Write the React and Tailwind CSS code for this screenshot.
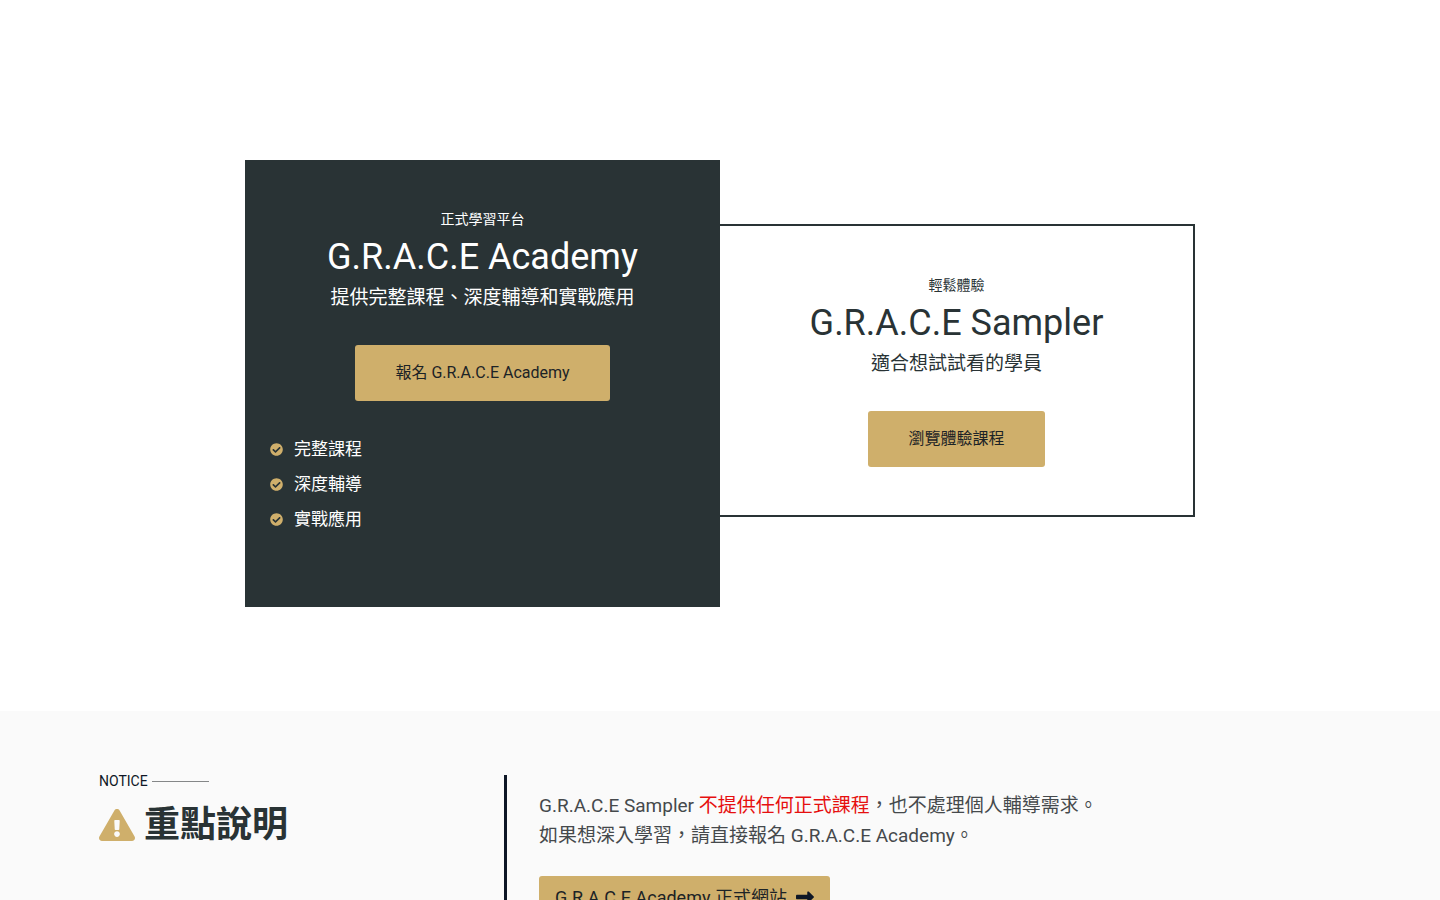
import { FaCheckCircle, FaExclamationTriangle } from "react-icons/fa";
import { FaRightLong } from "react-icons/fa6";

const features = ["完整課程", "深度輔導", "實戰應用"];

function PlanHeading({ eyebrow, title, subtitle, tone }) {
  return (
    <header className={`text-center ${tone}`}>
      <p className="text-[14px] leading-[23px]">{eyebrow}</p>
      <h2 className="text-[36px] leading-[52px]">{title}</h2>
      <p className="text-[19px] leading-[30px]">{subtitle}</p>
    </header>
  );
}

function PlanButton({ children }) {
  return (
    <a
      href="#"
      className="mt-8 flex h-14 items-center rounded-[3px] bg-[#cfaf6b] px-10 text-[16px] text-[#1c2326]"
    >
      {children}
    </a>
  );
}

export default function App() {
  return (
    <main className="min-h-screen bg-white font-['Roboto','Noto_Sans_CJK_TC',sans-serif]" lang="zh-Hant">
      <section className="px-6 pt-40 pb-26">
        <div className="mx-auto grid max-w-[950px] grid-cols-2 items-start">
          <article className="flex flex-col items-center bg-[#293335] px-6 pt-12 pb-[70px]">
            <PlanHeading
              eyebrow="正式學習平台"
              title="G.R.A.C.E Academy"
              subtitle="提供完整課程、深度輔導和實戰應用"
              tone="text-white"
            />
            <PlanButton>報名 G.R.A.C.E Academy</PlanButton>
            <ul className="mt-[31px] w-full pl-px text-[17px] text-white">
              {features.map((item) => (
                <li key={item} className="flex h-[35px] items-center gap-[11px]">
                  <FaCheckCircle className="size-[13px] text-[#cfaf6b]" aria-hidden="true" />
                  {item}
                </li>
              ))}
            </ul>
          </article>
          <article className="mt-16 flex flex-col items-center border-2 border-l-0 border-[#293335] px-6 py-12">
            <PlanHeading
              eyebrow="輕鬆體驗"
              title="G.R.A.C.E Sampler"
              subtitle="適合想試試看的學員"
              tone="text-[#293335]"
            />
            <PlanButton>瀏覽體驗課程</PlanButton>
          </article>
        </div>
      </section>

      <section className="bg-[#fafafa] px-6 py-16">
        <div className="mx-auto flex max-w-[1242px]">
          <header className="w-[405px] shrink-0">
            <p className="flex items-center gap-1 text-[14px] leading-[12px] text-[#0e1726]">
              NOTICE
              <span className="h-px w-[57px] bg-[#858788]" aria-hidden="true" />
            </p>
            <h2 className="mt-[11px] flex items-center gap-[9px] text-[36px] leading-[54px] font-bold text-[#293335]">
              <FaExclamationTriangle className="h-8 w-9 text-[#cfaf6b]" aria-hidden="true" />
              重點說明
            </h2>
          </header>
          <div className="flex-1 border-l-[3px] border-[#0e1726] py-4 pl-8">
            <p className="text-[19px] leading-[30px] text-[#45494c]">
              G.R.A.C.E Sampler <span className="text-[#e60f0f]">不提供任何正式課程</span>，也不處理個人輔導需求。
              <br />
              如果想深入學習，請直接報名 G.R.A.C.E Academy。
            </p>
            <a
              href="#"
              className="mt-[25px] inline-flex h-[42px] items-center gap-[9px] rounded-[3px] bg-[#cfaf6b] px-4 text-[18px] text-[#1c2326]"
            >
              G.R.A.C.E Academy 正式網站
              <FaRightLong className="size-[18px] text-[#0e1726]" aria-hidden="true" />
            </a>
          </div>
        </div>
      </section>
    </main>
  );
}
